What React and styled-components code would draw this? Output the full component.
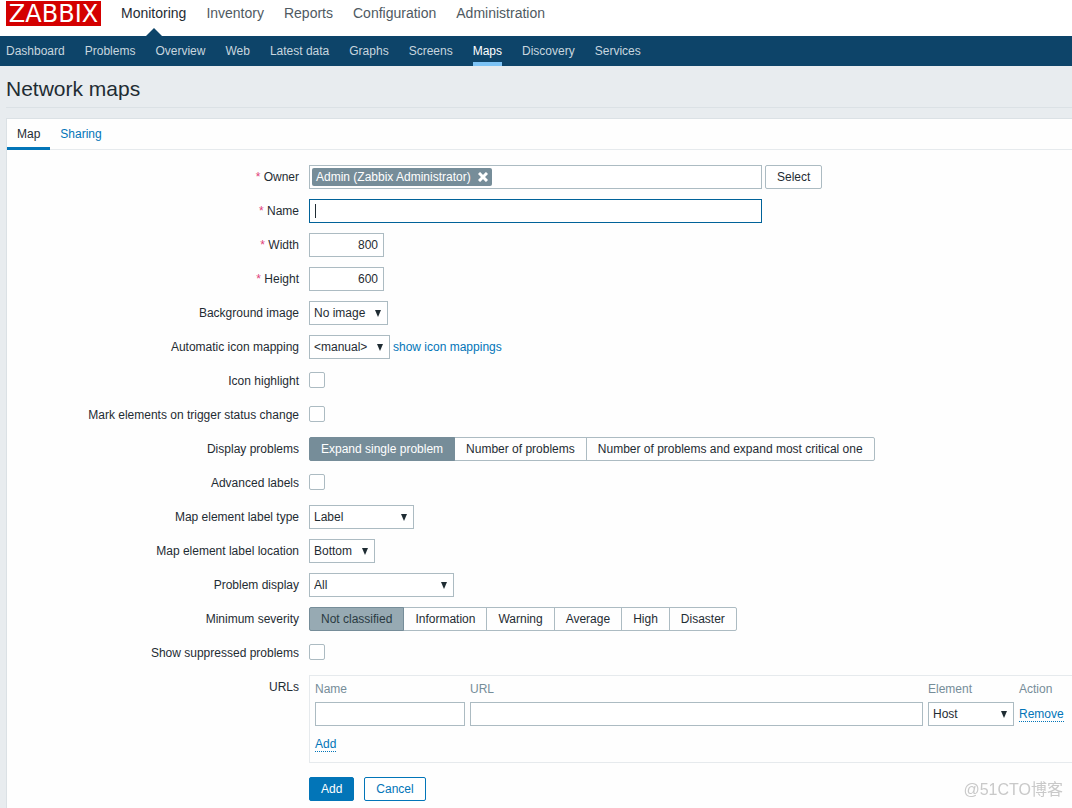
import React, { useState } from 'react';
import styled, { createGlobalStyle, css } from 'styled-components';

const GlobalStyle = createGlobalStyle`
  * {
    box-sizing: border-box;
  }

  body {
    margin: 0;
    background: #e8ecef;
    color: #1f2c33;
    font-family: "Liberation Sans", Arial, sans-serif;
    font-size: 12px;
    line-height: 14px;
  }

  button, input, select {
    font: inherit;
    color: inherit;
    margin: 0;
  }
`;

const Page = styled.div`
  min-height: 100vh;
  display: flex;
  flex-direction: column;
`;

const Header = styled.header`
  display: flex;
  align-items: flex-start;
  gap: 20px;
  height: 36px;
  padding: 1px 6px 0;
  background: #fff;
`;

const Logo = styled.a`
  display: block;
  width: 95px;
  height: 25px;
  background: #d40000;
  color: #fff;
  font-family: "DejaVu Sans", sans-serif;
  font-size: 24px;
  line-height: 26px;
  text-align: center;
  text-decoration: none;
`;

const MainNav = styled.nav`
  display: flex;
  gap: 20px;
`;

const MainLink = styled.a`
  position: relative;
  height: 35px;
  font-size: 14px;
  line-height: 24px;
  text-decoration: none;
  color: ${({ $active }) => ($active ? '#1f2c33' : '#4f5a62')};

  ${({ $active }) => $active && css`
    &::after {
      content: "";
      position: absolute;
      bottom: 0;
      left: 50%;
      margin-left: -8px;
      border: 8px solid transparent;
      border-top-width: 0;
      border-bottom-color: #0d4469;
    }
  `}
`;

const SubNav = styled.nav`
  display: flex;
  gap: 20px;
  height: 30px;
  padding: 0 6px;
  background: #0d4469;
`;

const SubLink = styled.a`
  line-height: 30px;
  text-decoration: none;
  color: ${({ $active }) => ($active ? '#fff' : '#c8d6df')};
  box-shadow: ${({ $active }) => ($active ? 'inset 0 -4px #7dc3f5' : 'none')};
`;

const Title = styled.h1`
  margin: 0 0 10px 6px;
  padding: 12px 0 7px;
  border-bottom: 1px solid #dbe1e5;
  font-size: 21px;
  font-weight: normal;
  line-height: 22px;
`;

const Panel = styled.main`
  flex: 1;
  margin-left: 6px;
  background: #fefefe;
  border: 1px solid #dbe1e5;
  border-width: 1px 0 0 1px;
`;

const Tabs = styled.div`
  display: flex;
  height: 31px;
  border-bottom: 1px solid #e6eaed;
`;

const Tab = styled.button`
  height: 31px;
  padding: 0 10px 2px;
  border: 0;
  background: none;
  color: ${({ $active }) => ($active ? '#1f2c33' : '#0275b8')};
  box-shadow: ${({ $active }) => ($active ? 'inset 0 -3px #0275b8' : 'none')};
  cursor: pointer;
`;

const Form = styled.form`
  display: flex;
  flex-direction: column;
  gap: 10px;
  padding: 15px 0 5px;
`;

const Row = styled.div`
  display: grid;
  grid-template-columns: 292px minmax(0, 1fr);
  column-gap: 10px;
`;

const Label = styled.label`
  line-height: 24px;
  text-align: right;

  ${({ $required }) => $required && css`
    &::before {
      content: "* ";
      color: #e0407a;
    }
  `}
`;

const Controls = styled.div`
  display: flex;
  align-items: center;
  gap: 3px;
  min-height: 24px;
`;

const inputBox = css`
  height: 24px;
  border: 1px solid #acbbc2;
  border-radius: 0;
  background: #fff;
`;

const Input = styled.input`
  ${inputBox}
  width: ${({ $width }) => $width}px;
  padding: 0 5px;
  text-align: ${({ $align }) => $align || 'left'};
  outline: 0;

  &:focus {
    border-color: #006299;
  }
`;

const CaretField = styled.span`
  position: relative;
  display: flex;

  input {
    caret-color: transparent;
  }

  input:focus:placeholder-shown + i {
    position: absolute;
    top: 5px;
    left: 6px;
    width: 1px;
    height: 14px;
    background: #1f2c33;
    pointer-events: none;
  }

  input:not(:placeholder-shown) {
    caret-color: #1f2c33;
  }
`;

const OwnerBox = styled.div`
  ${inputBox}
  width: 453px;
  padding: 2px;
`;

const Chip = styled.span`
  display: inline-flex;
  align-items: center;
  gap: 7px;
  height: 18px;
  padding: 0 4px;
  border-radius: 2px;
  background: #768d99;
  color: #fff;
`;

const ChipRemove = styled.button`
  display: flex;
  padding: 0;
  border: 0;
  background: none;
  cursor: pointer;
`;

const SelectWrap = styled.span`
  position: relative;
  display: inline-block;
  width: ${({ $width }) => $width}px;

  &::after {
    content: "";
    position: absolute;
    top: 9px;
    right: 7px;
    border: 3px solid transparent;
    border-top: 7px solid #1f2c33;
    border-bottom-width: 0;
    pointer-events: none;
  }

  select {
    ${inputBox}
    display: block;
    width: 100%;
    padding: 0 4px;
    appearance: none;
    outline: 0;
  }
`;

const Checkbox = styled.input`
  appearance: none;
  width: 16px;
  height: 16px;
  margin-bottom: 2px;
  border: 1px solid #acbbc2;
  border-radius: 2px;
  background: #fff;

  &:checked {
    background: #768d99;
  }
`;

const Segments = styled.div`
  display: flex;

  label {
    position: relative;
    height: 24px;
    padding: 0 11px;
    border: 1px solid #acbbc2;
    line-height: 22px;
    cursor: pointer;
  }

  label + label {
    margin-left: -1px;
  }

  label:first-child {
    border-radius: 2px 0 0 2px;
  }

  label:last-child {
    border-radius: 0 2px 2px 0;
  }

  label:has(input:checked) {
    z-index: 1;
    border-color: #768d99;
    background: ${({ $severity }) => ($severity ? '#97aab3' : '#768d99')};
    color: ${({ $severity }) => ($severity ? '#2a3a42' : '#fff')};
  }

  input {
    position: absolute;
    opacity: 0;
    pointer-events: none;
  }
`;

const Button = styled.button`
  height: 24px;
  padding: 0 11px;
  border: 1px solid ${({ $kind }) => ($kind ? '#0275b8' : '#acbbc2')};
  border-radius: 2px;
  background: ${({ $kind }) => ($kind === 'primary' ? '#0275b8' : '#fff')};
  color: ${({ $kind }) => ($kind === 'primary' ? '#fff' : $kind ? '#0275b8' : '#1f2c33')};
  cursor: pointer;
`;

const Link = styled.a`
  color: #0275b8;
  text-decoration: none;
`;

const DottedButton = styled.button`
  padding: 0;
  border: 0;
  border-bottom: 1px dotted #0275b8;
  background: none;
  color: #0275b8;
  cursor: pointer;
`;

const TableBox = styled.div`
  border: 1px solid #e6eaed;
  border-right: 0;
`;

const UrlTable = styled.table`
  border-collapse: collapse;

  th, td {
    padding: 0 0 0 5px;
    text-align: left;
  }

  th {
    height: 26px;
    color: #768d99;
    font-weight: normal;
  }

  td input {
    display: block;
  }

  tfoot td {
    height: 36px;
  }
`;

const Footer = styled(Row)`
  margin-top: 4px;

  ${Controls} {
    grid-column: 2;
    gap: 10px;
  }
`;

const Watermark = styled.span`
  position: fixed;
  right: 9px;
  bottom: 9px;
  color: #c9c9c9;
  font-family: "Liberation Sans", "Noto Sans CJK SC", sans-serif;
  font-size: 16px;
  line-height: 18px;
`;

const mainItems = ['Monitoring', 'Inventory', 'Reports', 'Configuration', 'Administration'];

const subItems = [
  'Dashboard', 'Problems', 'Overview', 'Web', 'Latest data',
  'Graphs', 'Screens', 'Maps', 'Discovery', 'Services',
];

const problemModes = [
  'Expand single problem',
  'Number of problems',
  'Number of problems and expand most critical one',
];

const severities = ['Not classified', 'Information', 'Warning', 'Average', 'High', 'Disaster'];

const Field = ({ id, label, required, children }) => (
  <Row>
    <Label htmlFor={id} $required={required}>{label}</Label>
    <Controls>{children}</Controls>
  </Row>
);

const Select = ({ width, options, ...rest }) => (
  <SelectWrap $width={width}>
    <select {...rest}>
      {options.map((option) => <option key={option}>{option}</option>)}
    </select>
  </SelectWrap>
);

const RadioGroup = ({ id, label, options, severity }) => {
  const [value, setValue] = useState(options[0]);

  return (
    <Row>
      <Label as="span" id={id}>{label}</Label>
      <Controls>
        <Segments role="radiogroup" aria-labelledby={id} $severity={severity}>
          {options.map((option) => (
            <label key={option}>
              <input
                type="radio"
                name={id}
                checked={value === option}
                onChange={() => setValue(option)}
              />
              {option}
            </label>
          ))}
        </Segments>
      </Controls>
    </Row>
  );
};

const App = () => {
  const [tab, setTab] = useState('Map');

  return (
    <Page>
      <GlobalStyle />
      <Header>
        <Logo href="#">ZABBIX</Logo>
        <MainNav>
          {mainItems.map((item) => (
            <MainLink key={item} href="#" $active={item === 'Monitoring'}>{item}</MainLink>
          ))}
        </MainNav>
      </Header>
      <SubNav>
        {subItems.map((item) => (
          <SubLink key={item} href="#" $active={item === 'Maps'}>{item}</SubLink>
        ))}
      </SubNav>
      <Title>Network maps</Title>
      <Panel>
        <Tabs>
          {['Map', 'Sharing'].map((item) => (
            <Tab key={item} type="button" $active={tab === item} onClick={() => setTab(item)}>
              {item}
            </Tab>
          ))}
        </Tabs>
        <Form onSubmit={(e) => e.preventDefault()}>
          <Field id="owner" label="Owner" required>
            <OwnerBox>
              <Chip>
                Admin (Zabbix Administrator)
                <ChipRemove type="button" aria-label="Remove owner">
                  <svg width="10" height="10" viewBox="0 0 10 10" stroke="#fff" strokeWidth="3">
                    <path d="M1 1l8 8M9 1l-8 8" />
                  </svg>
                </ChipRemove>
              </Chip>
            </OwnerBox>
            <Button id="owner" type="button">Select</Button>
          </Field>
          <Field id="name" label="Name" required>
            <CaretField>
              <Input id="name" type="text" placeholder=" " $width={453} autoFocus />
              <i />
            </CaretField>
          </Field>
          <Field id="width" label="Width" required>
            <Input id="width" type="text" $width={75} $align="right" defaultValue="800" />
          </Field>
          <Field id="height" label="Height" required>
            <Input id="height" type="text" $width={75} $align="right" defaultValue="600" />
          </Field>
          <Field id="background" label="Background image">
            <Select id="background" width={79} options={['No image']} />
          </Field>
          <Field id="iconmap" label="Automatic icon mapping">
            <Select id="iconmap" width={81} options={['<manual>']} />
            <Link href="#">show icon mappings</Link>
          </Field>
          <Field id="highlight" label="Icon highlight">
            <Checkbox id="highlight" type="checkbox" />
          </Field>
          <Field id="mark" label="Mark elements on trigger status change">
            <Checkbox id="mark" type="checkbox" />
          </Field>
          <RadioGroup id="problems" label="Display problems" options={problemModes} />
          <Field id="advanced" label="Advanced labels">
            <Checkbox id="advanced" type="checkbox" />
          </Field>
          <Field id="labeltype" label="Map element label type">
            <Select id="labeltype" width={105} options={['Label']} />
          </Field>
          <Field id="location" label="Map element label location">
            <Select id="location" width={66} options={['Bottom']} />
          </Field>
          <Field id="display" label="Problem display">
            <Select id="display" width={145} options={['All']} />
          </Field>
          <RadioGroup id="severity" label="Minimum severity" options={severities} severity />
          <Field id="suppressed" label="Show suppressed problems">
            <Checkbox id="suppressed" type="checkbox" />
          </Field>
          <Row>
            <Label as="span" id="urls">URLs</Label>
            <TableBox>
              <UrlTable aria-labelledby="urls">
                <thead>
                  <tr>
                    <th>Name</th>
                    <th>URL</th>
                    <th>Element</th>
                    <th>Action</th>
                  </tr>
                </thead>
                <tbody>
                  <tr>
                    <td><Input type="text" aria-label="Name" $width={150} /></td>
                    <td><Input type="text" aria-label="URL" $width={453} /></td>
                    <td><Select aria-label="Element" width={86} options={['Host']} /></td>
                    <td><DottedButton type="button">Remove</DottedButton></td>
                  </tr>
                </tbody>
                <tfoot>
                  <tr>
                    <td colSpan={4}><DottedButton type="button">Add</DottedButton></td>
                  </tr>
                </tfoot>
              </UrlTable>
            </TableBox>
          </Row>
          <Footer>
            <Controls>
              <Button type="submit" $kind="primary">Add</Button>
              <Button type="button" $kind="secondary">Cancel</Button>
            </Controls>
          </Footer>
        </Form>
      </Panel>
      <Watermark>@51CTO博客</Watermark>
    </Page>
  );
};

export default App;
